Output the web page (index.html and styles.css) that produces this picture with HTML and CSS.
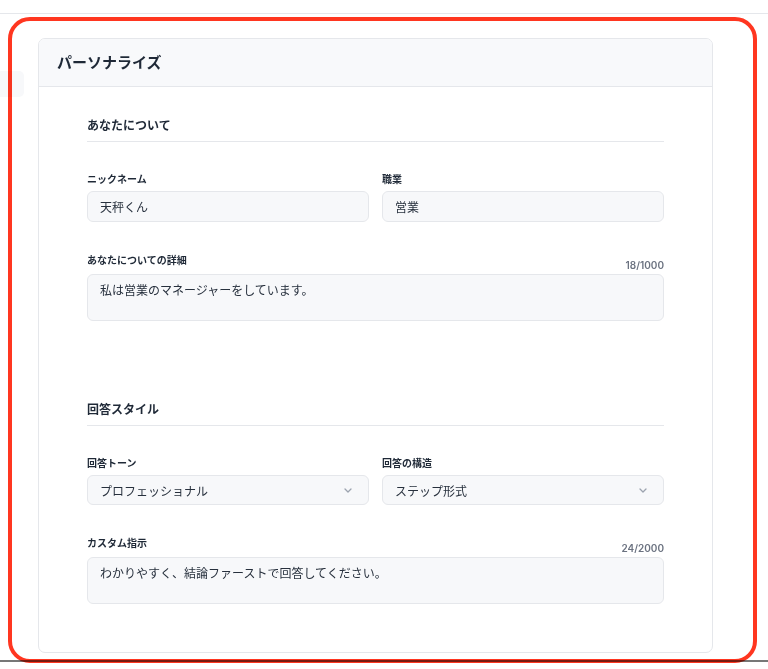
FILE: index.html
```html
<!DOCTYPE html>
<html lang="ja">
<head>
<meta charset="utf-8">
<title>パーソナライズ</title>
<link rel="stylesheet" href="styles.css">
</head>
<body>
<div class="topbar"></div>
<div class="main">
  <aside class="sidebar"><div class="side-item"></div></aside>
  <section class="card">
    <header class="card-header"><h1 class="card-title">パーソナライズ</h1></header>
    <div class="card-body">
      <div class="section">
        <h2 class="section-title">あなたについて</h2>
        <div class="row">
          <div class="field">
            <div class="field-label">ニックネーム</div>
            <div class="control">天秤くん</div>
          </div>
          <div class="field">
            <div class="field-label">職業</div>
            <div class="control">営業</div>
          </div>
        </div>
        <div class="field field-gap">
          <div class="field-head">
            <div class="field-label head-label">あなたについての詳細</div>
            <div class="counter">18/1000</div>
          </div>
          <div class="control area">私は営業のマネージャーをしています。</div>
        </div>
      </div>
      <div class="section section-2">
        <h2 class="section-title">回答スタイル</h2>
        <div class="row">
          <div class="field">
            <div class="field-label">回答トーン</div>
            <div class="control select"><span>プロフェッショナル</span>
              <svg class="chev" width="8" height="5" viewBox="0 0 8 5"><path d="M1 1l3 3 3-3" fill="none" stroke="#9ca3af" stroke-width="1.3" stroke-linecap="round" stroke-linejoin="round"/></svg>
            </div>
          </div>
          <div class="field">
            <div class="field-label">回答の構造</div>
            <div class="control select"><span>ステップ形式</span>
              <svg class="chev" width="8" height="5" viewBox="0 0 8 5"><path d="M1 1l3 3 3-3" fill="none" stroke="#9ca3af" stroke-width="1.3" stroke-linecap="round" stroke-linejoin="round"/></svg>
            </div>
          </div>
        </div>
        <div class="field field-gap2">
          <div class="field-head">
            <div class="field-label head-label">カスタム指示</div>
            <div class="counter">24/2000</div>
          </div>
          <div class="control area">わかりやすく、結論ファーストで回答してください。</div>
        </div>
      </div>
    </div>
  </section>
</div>
<div class="annotation"></div>
</body>
</html>
```

FILE: styles.css
```css
* { box-sizing: border-box; }
html, body { margin: 0; padding: 0; background: #ffffff; }
body {
  font-family: "Inter", "Noto Sans CJK JP", sans-serif;
  color: #1f2937;
  width: 768px;
  height: 669px;
  overflow: hidden;
  position: relative;
}
.topbar {
  height: 14px;
  border-bottom: 1px solid #e5e7eb;
}
.main {
  display: flex;
  align-items: flex-start;
  height: 648px;
  border-bottom: 2px solid #777777;
}
.sidebar {
  width: 24px;
  padding-top: 57px;
}
.side-item {
  height: 26px;
  background: #f7f8fa;
  border-radius: 0 5px 5px 0;
}
.card {
  margin-left: 14px;
  margin-top: 24px;
  width: 675px;
  border: 1px solid #e5e7eb;
  border-radius: 7px;
  overflow: hidden;
  background: #ffffff;
}
.card-header {
  height: 48px;
  background: #f8f9fb;
  border-bottom: 1px solid #e5e7eb;
  display: flex;
  align-items: center;
  padding-left: 18px;
}
.card-title {
  margin: 0;
  font-size: 15px;
  font-weight: 700;
  color: #1f2937;
  line-height: 20px;
}
.card-body {
  padding: 30px 48px 48px 48px;
}
.section-title {
  margin: 0;
  font-size: 12px;
  font-weight: 700;
  line-height: 18px;
  color: #1f2937;
  padding-bottom: 6px;
  border-bottom: 1px solid #e5e7eb;
}
.section-2 { margin-top: 80px; }
.row {
  display: grid;
  grid-template-columns: 1fr 1fr;
  column-gap: 13px;
  margin-top: 30px;
}
.field-gap { margin-top: 31px; }
.field-gap2 { margin-top: 31px; }
.field-label {
  font-size: 10px;
  font-weight: 700;
  line-height: 14px;
  color: #1f2937;
  margin-bottom: 5px;
}
.field-head {
  display: flex;
  justify-content: space-between;
  align-items: flex-end;
  margin-bottom: 3px;
}
.head-label { margin-bottom: 4px; }
.counter {
  font-size: 10px;
  font-weight: 600;
  line-height: 12px;
  color: #6b7280;
}
.control {
  height: 31px;
  background: #f7f8fa;
  border: 1px solid #e5e7eb;
  border-radius: 6px;
  padding: 0 12px;
  display: flex;
  align-items: center;
  font-size: 12px;
  color: #27303d;
}
.select {
  height: 30px;
  justify-content: space-between;
  padding-right: 16px;
}
.chev { display: block; }
.area {
  height: 47px;
  align-items: flex-start;
  padding-top: 7px;
  line-height: 18px;
}
.annotation {
  position: absolute;
  left: 8px;
  top: 17px;
  width: 749px;
  height: 646px;
  border: 4px solid #ff3620;
  border-radius: 22px;
  mix-blend-mode: multiply;
  pointer-events: none;
}
```
